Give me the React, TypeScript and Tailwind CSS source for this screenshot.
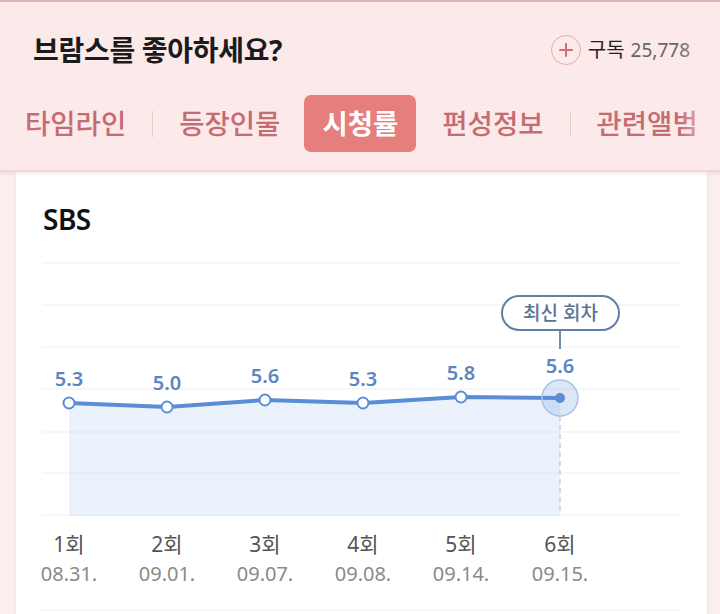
import React from "react";

const font = {fontFamily: '"Noto Sans", "Noto Sans CJK KR", sans-serif'};

const episodes = [
  {ep: "1회", date: "08.31.", value: "5.3", x: 53, y: 162},
  {ep: "2회", date: "09.01.", value: "5.0", x: 151, y: 166},
  {ep: "3회", date: "09.07.", value: "5.6", x: 249, y: 159},
  {ep: "4회", date: "09.08.", value: "5.3", x: 347, y: 162},
  {ep: "5회", date: "09.14.", value: "5.8", x: 445, y: 156},
  {ep: "6회", date: "09.15.", value: "5.6", x: 544, y: 157}
];

const gridLines = [22, 64, 106, 148, 191, 232, 274];

function Header() {
  return (
    <div className="relative border-t-2 border-[#d9b6af] border-b-2 border-b-[#f2d5d5] bg-[#fce9e9] pb-[18px] shadow-[0_2px_3px_rgba(220,170,170,0.25)]">
      <div className="flex h-[34px] items-center justify-between pl-[33px] pr-[30px] mt-[31px]">
        <h1 className="text-[28px] font-bold leading-none tracking-[-0.3px] text-[#1b1b1b]">
          브람스를 좋아하세요?
        </h1>
        <div className="flex items-center">
          <span className="flex h-[30px] w-[30px] items-center justify-center rounded-full border border-[#e6aaaa]">
            <svg width="14" height="14" viewBox="0 0 14 14">
              <path d="M7 1v12M1 7h12" stroke="#d86a6d" strokeWidth="2" strokeLinecap="round" />
            </svg>
          </span>
          <span className="ml-[7px] text-[20px] text-[#222]">구독</span>
          <span className="ml-[6px] text-[19px] text-[#666]">25,778</span>
        </div>
      </div>
      <div className="mt-[28px] flex h-[57px] items-center pl-[25px] text-[27.5px] font-medium leading-none text-[#c56b72] whitespace-nowrap">
        <span>타임라인</span>
        <span className="mx-[26px] h-[26px] w-px bg-[#ecc9c9]" />
        <span>등장인물</span>
        <span className="ml-[24px] flex h-[57px] items-center rounded-[7px] bg-[#e67e7e] px-[18px] font-bold text-white">
          시청률
        </span>
        <span className="ml-[26px]">편성정보</span>
        <span className="mx-[26px] h-[26px] w-px bg-[#ecc9c9]" />
        <span>관련앨범</span>
      </div>
      <div className="pointer-events-none absolute bottom-0 right-0 top-0 w-[40px] bg-gradient-to-r from-[#fce9e9]/0 to-[#fce9e9]" />
    </div>
  );
}

function Chart() {
  const line = episodes.map((p) => `${p.x},${p.y}`).join(" ");
  const area = `${line} 544,274 53,274`;
  const last = episodes[episodes.length - 1];
  return (
    <svg width="691" height="374" viewBox="0 0 691 374" className="mt-[4px] block">
      {gridLines.map((y) => (
        <line key={y} x1="26" x2="664" y1={y} y2={y} stroke="#efefef" strokeWidth="1.2" />
      ))}
      <polygon points={area} fill="#e9f1fc" opacity="0.9" />
      {gridLines
        .filter((y) => y > 160)
        .map((y) => (
          <line key={`a${y}`} x1="53" x2="544" y1={y} y2={y} stroke="#dde6f2" strokeWidth="1.2" />
        ))}
      <line x1="544" x2="544" y1="175" y2="274" stroke="#c5d0e0" strokeWidth="1.5" strokeDasharray="5 4" />
      <polyline points={line} fill="none" stroke="#5a8dd6" strokeWidth="4" strokeLinejoin="round" />
      {episodes.slice(0, -1).map((p) => (
        <circle key={p.ep} cx={p.x} cy={p.y} r="5.5" fill="#fff" stroke="#5a8dd6" strokeWidth="2" />
      ))}
      <circle cx={last.x} cy={last.y} r="18" fill="#5a8dd6" fillOpacity="0.22" stroke="#a9c1e8" strokeWidth="1.5" />
      <circle cx={last.x} cy={last.y} r="5" fill="#5a8dd6" />
      {episodes.map((p, i) => (
        <text
          key={`v${p.ep}`}
          x={p.x}
          y={i === episodes.length - 1 ? p.y - 25 : p.y - 17}
          textAnchor="middle"
          fontSize="20"
          fontWeight="600"
          fill="#5a86c4"
        >
          {p.value}
        </text>
      ))}
      <line x1="544" x2="544" y1="89" y2="108" stroke="#6f8bb0" strokeWidth="2" />
      <rect x="486" y="55" width="117" height="34" rx="17" fill="#fff" stroke="#607ea6" strokeWidth="2" />
      <text x="544.5" y="79" textAnchor="middle" fontSize="19" fontWeight="500" fill="#5b7396">
        최신 회차
      </text>
      {episodes.map((p) => (
        <g key={`l${p.ep}`}>
          <text x={p.x} y="311" textAnchor="middle" fontSize="21" fill="#555">
            {p.ep}
          </text>
          <text x={p.x} y="340" textAnchor="middle" fontSize="20" fill="#8a8a8a">
            {p.date}
          </text>
        </g>
      ))}
      <line x1="26" x2="664" y1="369" y2="369" stroke="#efefef" strokeWidth="1.2" />
    </svg>
  );
}

export default function App() {
  return (
    <div className="h-[614px] w-[720px] overflow-hidden bg-[#fbeeee]" style={font}>
      <Header />
      <div className="ml-[16px] mr-[13px] bg-white shadow-[0_0_3px_rgba(200,160,160,0.25)]">
        <div className="pl-[27px] pt-[29px] text-[28px] font-semibold leading-[36px] tracking-[-0.5px] text-[#111]">
          SBS
        </div>
        <Chart />
      </div>
    </div>
  );
}
